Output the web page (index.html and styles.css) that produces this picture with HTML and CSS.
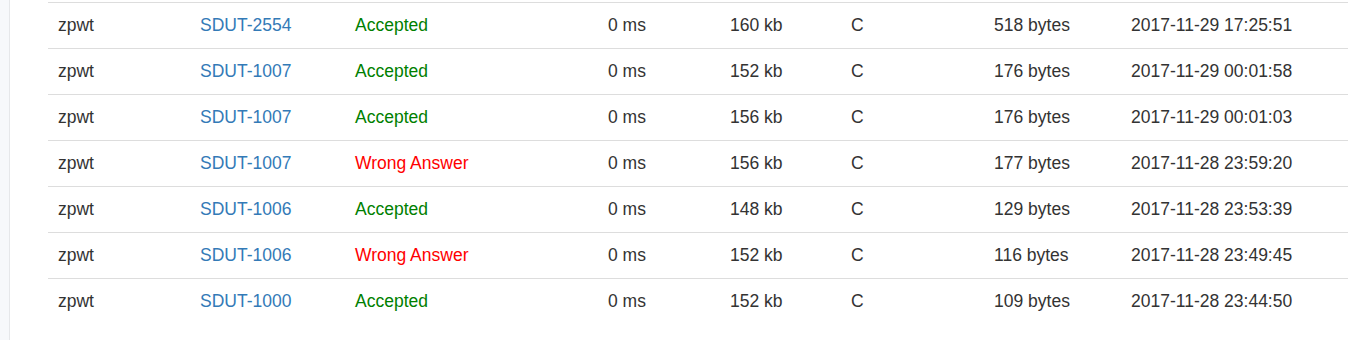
FILE: index.html
```html
<!DOCTYPE html>
<html>
<head>
<meta charset="utf-8">
<link rel="stylesheet" href="styles.css">
</head>
<body>
<div class="page">
  <aside class="sidebar"></aside>
  <main class="main">
    <table class="status">
      <colgroup>
        <col class="c-user"><col class="c-prob"><col class="c-res"><col class="c-time"><col class="c-mem"><col class="c-lang"><col class="c-len"><col class="c-date">
      </colgroup>
      <tbody>
        <tr><td>zpwt</td><td><a href="#">SDUT-2554</a></td><td class="ac">Accepted</td><td>0 ms</td><td>160 kb</td><td>C</td><td>518 bytes</td><td>2017-11-29 17:25:51</td></tr>
        <tr><td>zpwt</td><td><a href="#">SDUT-1007</a></td><td class="ac">Accepted</td><td>0 ms</td><td>152 kb</td><td>C</td><td>176 bytes</td><td>2017-11-29 00:01:58</td></tr>
        <tr><td>zpwt</td><td><a href="#">SDUT-1007</a></td><td class="ac">Accepted</td><td>0 ms</td><td>156 kb</td><td>C</td><td>176 bytes</td><td>2017-11-29 00:01:03</td></tr>
        <tr><td>zpwt</td><td><a href="#">SDUT-1007</a></td><td class="wa">Wrong Answer</td><td>0 ms</td><td>156 kb</td><td>C</td><td>177 bytes</td><td>2017-11-28 23:59:20</td></tr>
        <tr><td>zpwt</td><td><a href="#">SDUT-1006</a></td><td class="ac">Accepted</td><td>0 ms</td><td>148 kb</td><td>C</td><td>129 bytes</td><td>2017-11-28 23:53:39</td></tr>
        <tr><td>zpwt</td><td><a href="#">SDUT-1006</a></td><td class="wa">Wrong Answer</td><td>0 ms</td><td>152 kb</td><td>C</td><td>116 bytes</td><td>2017-11-28 23:49:45</td></tr>
        <tr><td>zpwt</td><td><a href="#">SDUT-1000</a></td><td class="ac">Accepted</td><td>0 ms</td><td>152 kb</td><td>C</td><td>109 bytes</td><td>2017-11-28 23:44:50</td></tr>
      </tbody>
    </table>
  </main>
</div>
</body>
</html>
```
FILE: styles.css
```css
html, body {
  margin: 0;
  padding: 0;
  background: #fff;
}
body {
  font-family: "Liberation Sans", Arial, Helvetica, sans-serif;
  font-size: 17.5px;
  line-height: 25px;
  color: #333;
}
.page {
  display: flex;
  min-height: 340px;
}
.sidebar {
  width: 9px;
  flex: none;
  background: #f7f8fb;
  border-right: 1px solid #e6e7ea;
}
.main {
  flex: 1;
  padding: 2px 1px 0 38px;
}
.status {
  width: 100%;
  border-collapse: collapse;
  table-layout: fixed;
}
.status td {
  padding: 10px;
  border-top: 1px solid #ddd;
  vertical-align: top;
  white-space: nowrap;
}
.c-user { width: 142px; }
.c-prob { width: 155px; }
.c-res { width: 253px; }
.c-time { width: 122px; }
.c-mem { width: 121px; }
.c-lang { width: 143px; }
.c-len { width: 137px; }
.c-date { width: auto; }
.status a {
  color: #337ab7;
  text-decoration: none;
}
.ac { color: #008000; }
.wa { color: #ff0000; }
```
